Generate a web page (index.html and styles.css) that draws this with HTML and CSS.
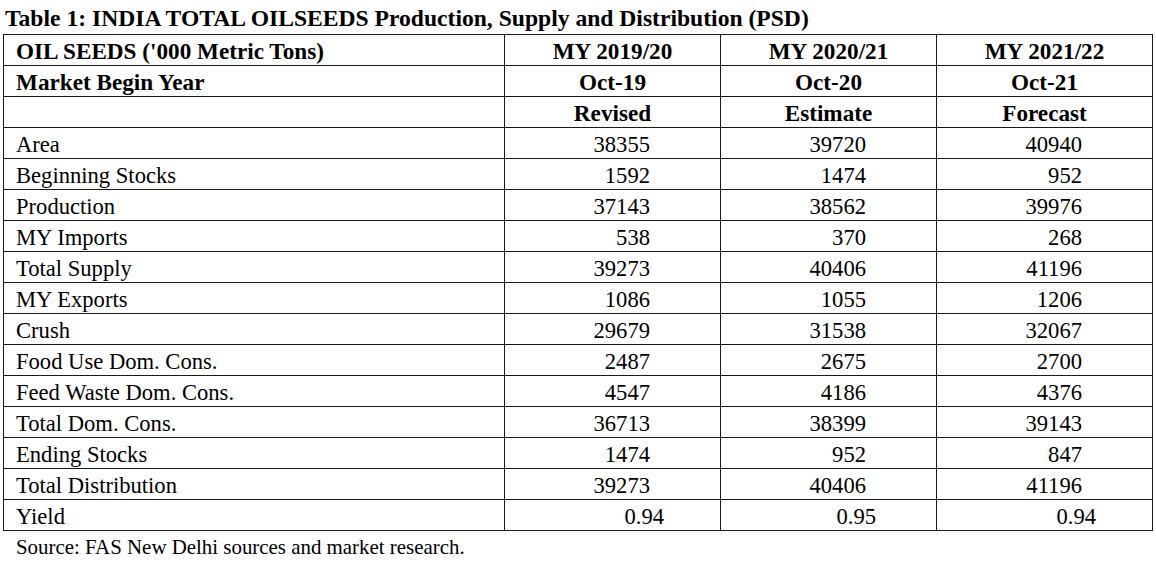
FILE: index.html
```html
<!DOCTYPE html>
<html lang="en">
<head>
<meta charset="utf-8">
<title>Table 1: India Total Oilseeds PSD</title>
<link rel="stylesheet" href="styles.css">
</head>
<body>
<div class="page">
  <h1 class="title">Table 1: INDIA TOTAL OILSEEDS Production, Supply and Distribution (PSD)</h1>
  <table class="psd">
    <colgroup>
      <col class="c-label">
      <col class="c-val">
      <col class="c-val">
      <col class="c-val">
    </colgroup>
    <thead>
      <tr><th class="lbl">OIL SEEDS ('000 Metric Tons)</th><th>MY 2019/20</th><th>MY 2020/21</th><th>MY 2021/22</th></tr>
      <tr><th class="lbl">Market Begin Year</th><th>Oct-19</th><th>Oct-20</th><th>Oct-21</th></tr>
      <tr><th class="lbl"></th><th>Revised</th><th>Estimate</th><th>Forecast</th></tr>
    </thead>
    <tbody>
      <tr><td class="lbl">Area</td><td>38355</td><td>39720</td><td>40940</td></tr>
      <tr><td class="lbl">Beginning Stocks</td><td>1592</td><td>1474</td><td>952</td></tr>
      <tr><td class="lbl">Production</td><td>37143</td><td>38562</td><td>39976</td></tr>
      <tr><td class="lbl">MY Imports</td><td>538</td><td>370</td><td>268</td></tr>
      <tr><td class="lbl">Total Supply</td><td>39273</td><td>40406</td><td>41196</td></tr>
      <tr><td class="lbl">MY Exports</td><td>1086</td><td>1055</td><td>1206</td></tr>
      <tr><td class="lbl">Crush</td><td>29679</td><td>31538</td><td>32067</td></tr>
      <tr><td class="lbl">Food Use Dom. Cons.</td><td>2487</td><td>2675</td><td>2700</td></tr>
      <tr><td class="lbl">Feed Waste Dom. Cons.</td><td>4547</td><td>4186</td><td>4376</td></tr>
      <tr><td class="lbl">Total Dom. Cons.</td><td>36713</td><td>38399</td><td>39143</td></tr>
      <tr><td class="lbl">Ending Stocks</td><td>1474</td><td>952</td><td>847</td></tr>
      <tr><td class="lbl">Total Distribution</td><td>39273</td><td>40406</td><td>41196</td></tr>
      <tr class="yield"><td class="lbl">Yield</td><td class="y1">0.94</td><td class="y2">0.95</td><td class="y3">0.94</td></tr>
    </tbody>
  </table>
  <p class="source">Source: FAS New Delhi sources and market research.</p>
</div>
</body>
</html>
```

FILE: styles.css
```css
html, body {
  margin: 0;
  padding: 0;
  background: #ffffff;
}

body {
  font-family: "Liberation Serif", "Times New Roman", serif;
  color: #000000;
}

.page {
  padding: 0 0 0 3px;
}

.title {
  margin: 0;
  padding: 6px 0 0 2px;
  height: 34px;
  box-sizing: border-box;
  font-size: 23.6px;
  font-weight: bold;
  line-height: 25px;
  white-space: nowrap;
}

.psd {
  border-collapse: collapse;
  width: 1150px;
  table-layout: fixed;
}

.c-label { width: 501px; }
.c-val { width: 216px; }

.psd th,
.psd td {
  border: 1px solid #1a1a1a;
  padding: 3px 70px 0 0;
  height: 27px;
  line-height: 27px;
  font-size: 22.6px;
  text-align: right;
  white-space: nowrap;
  overflow: hidden;
  vertical-align: top;
}

.psd th {
  font-weight: bold;
  font-size: 23.2px;
  text-align: center;
  padding-right: 0;
}

.psd th.lbl,
.psd td.lbl {
  text-align: left;
  padding-left: 12px;
  padding-right: 0;
}

.psd td.y1 { padding-right: 56px; }
.psd td.y2 { padding-right: 60px; }
.psd td.y3 { padding-right: 56px; }

.source {
  margin: 0;
  padding: 3px 0 0 13px;
  font-size: 20.9px;
  line-height: 26px;
}
```
